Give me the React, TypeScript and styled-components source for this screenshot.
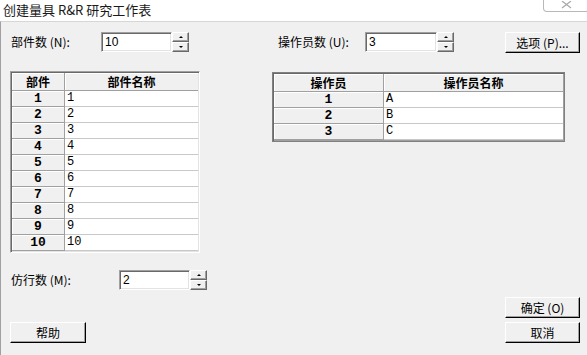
import React from "react";
import styled, { createGlobalStyle } from "styled-components";

const Global = createGlobalStyle`
  html, body { margin: 0; padding: 0; background: #f0f0f0; }
  body {
    font-family: "Noto Sans CJK SC", "Liberation Sans", sans-serif;
    font-size: 12px;
    color: #000;
  }
`;

const Window = styled.div`
  width: 587px;
  height: 355px;
  overflow: hidden;
  display: flex;
  flex-direction: column;
  background: #f0f0f0;
`;

const TitleBar = styled.div`
  height: 21px;
  flex: none;
  background: #fff;
  display: flex;
  justify-content: space-between;
  align-items: flex-start;
`;

const Title = styled.div`
  padding: 2px 0 0 3px;
  font-size: 13px;
  line-height: 16px;
  color: #1a1a1a;
  white-space: nowrap;
`;

const CloseBtn = styled.div`
  width: 46px;
  height: 12px;
  margin-right: -2px;
  border: 1px solid #b8b8b8;
  border-top: none;
  border-radius: 0 0 4px 4px;
  background: #fff;
  display: flex;
  justify-content: center;
  align-items: flex-start;
  padding-top: 1px;
  box-sizing: border-box;
`;

const Body = styled.div`
  flex: 1;
  border-top: 1px solid #d6d6d6;
  border-left: 1px solid #a0a0a0;
  padding: 10px 7px 0 9px;
  display: flex;
  flex-direction: column;
`;

const TopRow = styled.div`
  display: flex;
  align-items: flex-start;
  height: 21px;
`;

const Label = styled.div<{ $w: number; $ml?: number }>`
  width: ${(p) => p.$w}px;
  margin-left: ${(p) => p.$ml ?? 0}px;
  padding-left: 1px;
  box-sizing: border-box;
  height: 20px;
  line-height: 20px;
  font-size: 12px;
  white-space: nowrap;
`;

const Spin = styled.div`
  display: flex;
  height: 20px;
`;

const SpinInput = styled.div<{ $w: number }>`
  width: ${(p) => p.$w}px;
  height: 20px;
  box-sizing: border-box;
  background: #fff;
  border-style: solid;
  border-width: 1px;
  border-color: #a0a0a0 #fff #fff #a0a0a0;
  box-shadow: inset 1px 1px #696969, inset -1px -1px #e3e3e3;
  padding: 0 0 0 3px;
  font-family: "Liberation Sans", sans-serif;
  font-size: 12px;
  line-height: 18px;
`;

const SpinButtons = styled.div`
  width: 17px;
  display: flex;
  flex-direction: column;
`;

const SpinBtn = styled.div`
  flex: 1;
  box-sizing: border-box;
  background: #f0f0f0;
  border-style: solid;
  border-width: 1px;
  border-color: #fff #696969 #696969 #fff;
  box-shadow: inset -1px -1px #a0a0a0;
  display: flex;
  align-items: center;
  justify-content: center;
`;

const Arrow = styled.span<{ $up?: boolean }>`
  width: 0;
  height: 0;
  border-left: 2px solid transparent;
  border-right: 2px solid transparent;
  ${(p) => (p.$up ? "border-bottom: 2px solid #000;" : "border-top: 2px solid #000;")}
`;

const Button = styled.div<{ $w?: number }>`
  width: ${(p) => p.$w ?? 75}px;
  height: 21px;
  box-sizing: border-box;
  background: #f0f0f0;
  border-style: solid;
  border-width: 1px;
  border-color: #fff #000 #000 #fff;
  box-shadow: inset -1px -1px #a0a0a0;
  display: flex;
  align-items: center;
  justify-content: center;
  font-size: 12px;
  line-height: 19px;
  white-space: nowrap;
`;

const OptionsBtn = styled(Button)`
  margin-left: auto;
`;

const TablesRow = styled.div`
  display: flex;
  align-items: flex-start;
  margin-top: 18px;
`;

const Grid = styled.div<{ $cols: string; $w: number; $ml?: number; $mt?: number; $dark?: boolean }>`
  width: ${(p) => p.$w}px;
  margin-left: ${(p) => p.$ml ?? 0}px;
  margin-top: ${(p) => p.$mt ?? 0}px;
  box-sizing: border-box;
  display: grid;
  grid-template-columns: ${(p) => p.$cols};
  grid-template-rows: 18px;
  grid-auto-rows: 16px;
  border-style: solid;
  border-width: 1px;
  border-color: ${(p) => (p.$dark ? "#808080" : "#a0a0a0 #fff #fff #a0a0a0")};
  padding: 1px;
  box-shadow: ${(p) => (p.$dark ? "inset 1px 1px #696969, inset -1px -1px #a0a0a0" : "inset 1px 1px #696969, inset -1px -1px #e3e3e3")};
  background: #fff;
`;

const HeadCell = styled.div`
  box-sizing: border-box;
  background: #f0f0f0;
  border-right: 1px solid #a0a0a0;
  border-bottom: 1px solid #a0a0a0;
  box-shadow: inset 1px 1px #fff;
  font-weight: bold;
  font-size: 12px;
  line-height: 17px;
  text-align: center;
  white-space: nowrap;
  &:nth-child(2) { border-right: none; }
`;

const RowHead = styled.div`
  box-sizing: border-box;
  background: #f0f0f0;
  border-right: 1px solid #a0a0a0;
  border-bottom: 1px solid #a0a0a0;
  box-shadow: inset 1px 1px #fff;
  font-family: "Liberation Mono", monospace;
  font-weight: bold;
  font-size: 13px;
  line-height: 15px;
  text-align: center;
`;

const DataCell = styled.div`
  box-sizing: border-box;
  background: #fff;
  border-bottom: 1px solid #c8c8c8;
  padding-left: 2px;
  font-family: "Liberation Mono", monospace;
  font-size: 12px;
  line-height: 15px;
`;

const CellPair = styled.div`
  display: contents;
`;

const ReplicatesRow = styled.div`
  display: flex;
  align-items: flex-start;
  margin-top: 17px;
  height: 20px;
`;

const BottomBar = styled.div`
  display: flex;
  justify-content: space-between;
  align-items: flex-end;
  margin-top: 7px;
`;

const ButtonColumn = styled.div`
  display: flex;
  flex-direction: column;
  gap: 4px;
`;

const SpinBox: React.FC<{ value: string; w: number }> = ({ value, w }) => (
  <Spin>
    <SpinInput $w={w}>{value}</SpinInput>
    <SpinButtons>
      <SpinBtn><Arrow $up /></SpinBtn>
      <SpinBtn><Arrow /></SpinBtn>
    </SpinButtons>
  </Spin>
);

const parts = ["1", "2", "3", "4", "5", "6", "7", "8", "9", "10"];
const operators = [
  { n: "1", name: "A" },
  { n: "2", name: "B" },
  { n: "3", name: "C" },
];

export default function App() {
  return (
    <Window>
      <Global />
      <TitleBar>
        <Title>创建量具 R&amp;R 研究工作表</Title>
        <CloseBtn>
          <svg width="11" height="8" viewBox="0 0 11 8">
            <path d="M1 0 L10 7 M10 0 L1 7" stroke="#a8a8a8" strokeWidth="1.2" fill="none" />
          </svg>
        </CloseBtn>
      </TitleBar>
      <Body>
        <TopRow>
          <Label $w={91}>部件数 (N):</Label>
          <SpinBox value="10" w={71} />
          <Label $w={88} $ml={88}>操作员数 (U):</Label>
          <SpinBox value="3" w={72} />
          <OptionsBtn>选项 (P)...</OptionsBtn>
        </TopRow>

        <TablesRow>
          <Grid $cols="53px 1fr" $w={190}>
            <CellPair>
              <HeadCell>部件</HeadCell>
              <HeadCell>部件名称</HeadCell>
            </CellPair>
            {parts.map((p) => (
              <CellPair key={p}>
                <RowHead>{p}</RowHead>
                <DataCell>{p}</DataCell>
              </CellPair>
            ))}
          </Grid>
          <Grid $cols="110px 1fr" $w={293} $ml={72} $mt={1} $dark>
            <CellPair>
              <HeadCell>操作员</HeadCell>
              <HeadCell>操作员名称</HeadCell>
            </CellPair>
            {operators.map((o) => (
              <CellPair key={o.n}>
                <RowHead>{o.n}</RowHead>
                <DataCell>{o.name}</DataCell>
              </CellPair>
            ))}
          </Grid>
        </TablesRow>

        <ReplicatesRow>
          <Label $w={109}>仿行数 (M):</Label>
          <SpinBox value="2" w={71} />
        </ReplicatesRow>

        <BottomBar>
          <Button $w={76}>帮助</Button>
          <ButtonColumn>
            <Button>确定 (O)</Button>
            <Button>取消</Button>
          </ButtonColumn>
        </BottomBar>
      </Body>
    </Window>
  );
}
